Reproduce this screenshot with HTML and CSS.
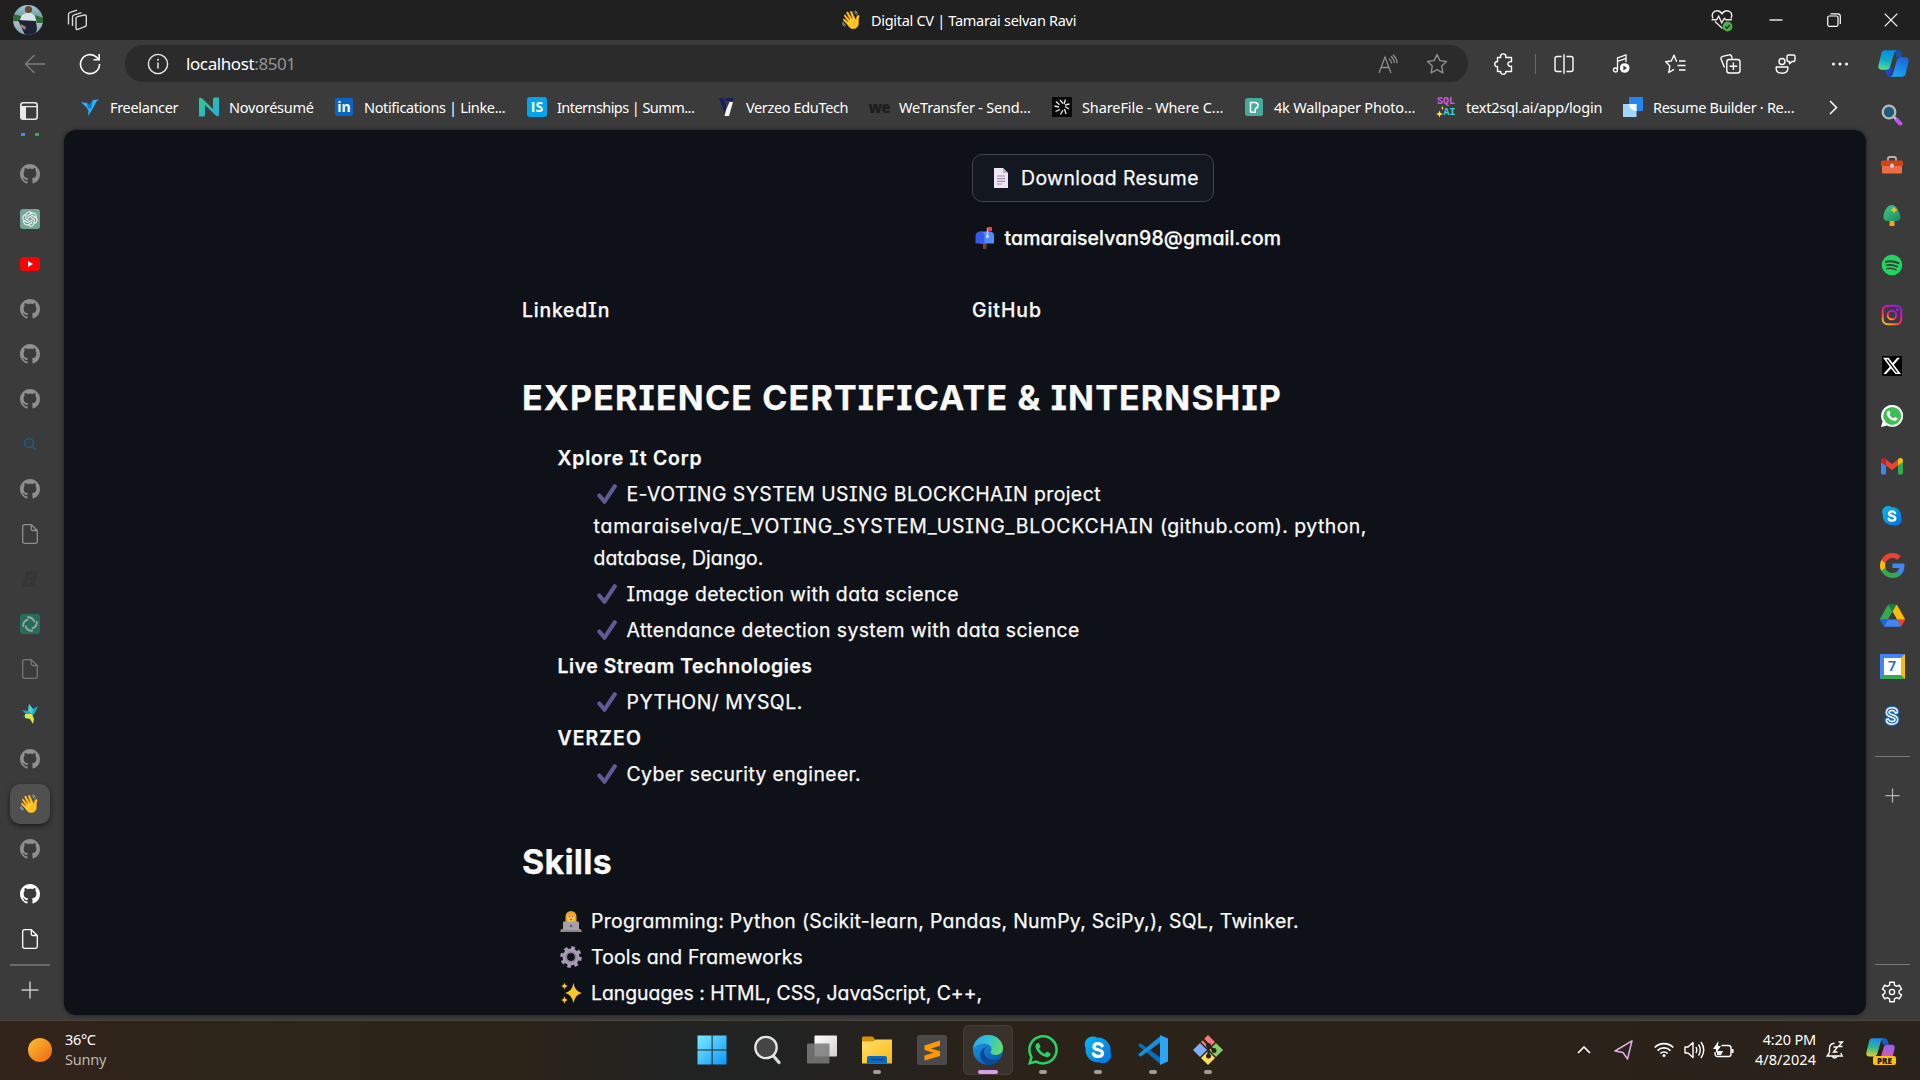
FILE: index.html
```html
<!DOCTYPE html>
<html lang="en">
<head>
<meta charset="utf-8">
<title>Digital CV | Tamarai selvan Ravi</title>
<link rel="stylesheet" href="styles.css">
</head>
<body>
<svg class="defs" aria-hidden="true">
  <defs>
    <linearGradient id="gCyan" x1="0" y1="0" x2="1" y2="1"><stop offset="0" stop-color="#7ceaff"/><stop offset="1" stop-color="#0f97fb"/></linearGradient>
    <linearGradient id="gNovo" x1="0" y1="0" x2="1" y2="1"><stop offset="0" stop-color="#34c78f"/><stop offset="1" stop-color="#1fb0dc"/></linearGradient>
    <linearGradient id="gCopA" x1="0.4" y1="0" x2="0.2" y2="1"><stop offset="0" stop-color="#0b8be0"/><stop offset=".5" stop-color="#10a9c9"/><stop offset="1" stop-color="#5fe08a"/></linearGradient>
    <linearGradient id="gCopB" x1="0.7" y1="0" x2="0.3" y2="1"><stop offset="0" stop-color="#1f63d8"/><stop offset="1" stop-color="#18a8f8"/></linearGradient>
    <linearGradient id="gPreA" x1="0.3" y1="0" x2="0.2" y2="1"><stop offset="0" stop-color="#1c8af0"/><stop offset=".5" stop-color="#2fb98d"/><stop offset="1" stop-color="#e5cf2c"/></linearGradient>
    <linearGradient id="gPreB" x1="0.7" y1="0" x2="0.3" y2="1"><stop offset="0" stop-color="#9a5cf2"/><stop offset="1" stop-color="#f25d8c"/></linearGradient>
    <linearGradient id="gInsta" x1="0.2" y1="1" x2="0.8" y2="0"><stop offset="0" stop-color="#fdb52a"/><stop offset=".35" stop-color="#fb2f5b"/><stop offset=".65" stop-color="#e016b5"/><stop offset="1" stop-color="#8a1df5"/></linearGradient>
    <linearGradient id="gSun" x1="0" y1="0" x2="1" y2="1"><stop offset="0" stop-color="#f8c235"/><stop offset="1" stop-color="#f2640c"/></linearGradient>
    <linearGradient id="gFolder" x1="0" y1="0" x2="1" y2="1"><stop offset="0" stop-color="#ffdf72"/><stop offset="1" stop-color="#fbb80c"/></linearGradient>
    <linearGradient id="gSkype" x1="0" y1="0" x2="1" y2="1"><stop offset="0" stop-color="#08b8f2"/><stop offset="1" stop-color="#0a6fd8"/></linearGradient>
    <linearGradient id="gEdgeA" x1="0" y1="0.3" x2="1" y2="0.6"><stop offset="0" stop-color="#2ba6e8"/><stop offset=".5" stop-color="#34c4d0"/><stop offset="1" stop-color="#67dd5d"/></linearGradient>
    <linearGradient id="gEdgeB" x1="0" y1="0" x2=".8" y2="1"><stop offset="0" stop-color="#1f9ee8"/><stop offset="1" stop-color="#0a55ad"/></linearGradient>
    <linearGradient id="gPane" x1="0" y1="0" x2="1" y2="1"><stop offset="0" stop-color="#ffffff"/><stop offset="1" stop-color="#cfcfcf"/></linearGradient>
    <linearGradient id="gTree" x1="0" y1="0" x2="1" y2="1"><stop offset="0" stop-color="#46c98a"/><stop offset="1" stop-color="#178a62"/></linearGradient>
    <linearGradient id="gSky" x1="0" y1="0" x2="0" y2="1"><stop offset="0" stop-color="#9fc9e4"/><stop offset=".45" stop-color="#6f9a86"/><stop offset=".6" stop-color="#aeb8bb"/><stop offset="1" stop-color="#7aa9c4"/></linearGradient>
    <clipPath id="cAvatar"><circle cx="15" cy="15" r="15"/></clipPath>

    <symbol id="github" viewBox="0 0 16 16"><path fill="currentColor" d="M8 0C3.58 0 0 3.58 0 8c0 3.54 2.29 6.53 5.47 7.59.4.07.55-.17.55-.38 0-.19-.01-.82-.01-1.49-2.01.37-2.53-.49-2.69-.94-.09-.23-.48-.94-.82-1.13-.28-.15-.68-.52-.01-.53.63-.01 1.08.58 1.23.82.72 1.21 1.87.87 2.33.66.07-.52.28-.87.51-1.07-1.78-.2-3.64-.89-3.64-3.95 0-.87.31-1.59.82-2.15-.08-.2-.36-1.02.08-2.12 0 0 .67-.21 2.2.82.64-.18 1.32-.27 2-.27.68 0 1.36.09 2 .27 1.53-1.04 2.2-.82 2.2-.82.44 1.1.16 1.92.08 2.12.51.56.82 1.27.82 2.15 0 3.07-1.87 3.75-3.65 3.95.29.25.54.73.54 1.48 0 1.07-.01 1.93-.01 2.2 0 .21.15.46.55.38A8.01 8.01 0 0 0 16 8c0-4.42-3.58-8-8-8z"/></symbol>
    <symbol id="page" viewBox="0 0 20 20"><path fill="none" stroke="currentColor" stroke-width="1.3" stroke-linejoin="round" d="M4.5.7h6.800L17.300 6.500V17.500a1.800 1.800 0 0 1-1.800 1.800h-11a1.800 1.800 0 0 1-1.800-1.800v-15A1.800 1.800 0 0 1 4.500.7zM11.300.9v4.200a1.400 1.400 0 0 0 1.400 1.400h4.500"/></symbol>
    <symbol id="check" viewBox="0 0 20 20"><path fill="none" stroke="#635994" stroke-width="4.200" stroke-linecap="round" stroke-linejoin="round" d="M2.300 11.500l5.200 6.200L17.700 2.300"/></symbol>
    <symbol id="plus" viewBox="0 0 18 18"><path fill="none" stroke="currentColor" stroke-width="1.500" d="M9 .5v17M.5 9h17"/></symbol>
    <symbol id="whatsapp" viewBox="0 0 16 16"><path fill="currentColor" d="M13.601 2.326A7.85 7.85 0 0 0 7.994 0C3.627 0 .068 3.558.064 7.926c0 1.399.366 2.76 1.057 3.965L0 16l4.204-1.102a7.9 7.9 0 0 0 3.79.965h.004c4.368 0 7.926-3.558 7.93-7.93A7.9 7.9 0 0 0 13.6 2.326zM7.994 14.521a6.600 6.600 0 0 1-3.356-.92l-.24-.144-2.494.654.666-2.433-.156-.251a6.560 6.560 0 0 1-1.007-3.505c0-3.626 2.957-6.584 6.591-6.584a6.560 6.560 0 0 1 4.660 1.931 6.560 6.560 0 0 1 1.928 4.660c-.004 3.639-2.961 6.592-6.592 6.592m3.615-4.934c-.197-.099-1.170-.578-1.353-.646-.182-.065-.315-.099-.445.099-.133.197-.513.646-.627.775-.114.133-.232.148-.430.050-.197-.100-.836-.308-1.592-.985-.590-.525-.985-1.175-1.103-1.372-.114-.198-.011-.304.088-.403.087-.088.197-.232.296-.346.100-.114.133-.198.198-.330.065-.134.034-.248-.015-.347-.050-.099-.445-1.076-.612-1.470-.160-.389-.323-.335-.445-.340-.114-.007-.247-.007-.380-.007a.730.730 0 0 0-.529.247c-.182.198-.691.677-.691 1.654s.710 1.916.810 2.049c.098.133 1.394 2.132 3.383 2.992.470.205.840.326 1.129.418.475.152.904.129 1.246.080.380-.058 1.171-.480 1.338-.943.164-.464.164-.860.114-.943-.049-.084-.182-.133-.380-.232"/></symbol>
    <symbol id="skype" viewBox="0 0 24 24"><path fill="url(#gSkype)" d="M7.200 1.200a6.200 6.200 0 0 1 4.300.9A10 10 0 0 1 22 13.600a6.400 6.400 0 0 1-8.700 8.300A10 10 0 0 1 2.100 10.600 6.400 6.400 0 0 1 7.200 1.200z"/><path fill="none" stroke="#fff" stroke-width="2.600" stroke-linecap="round" d="M15.300 8.700c-.6-1.300-1.800-1.800-3.300-1.800-1.900 0-3.300.9-3.300 2.400 0 3.500 6.900 1.500 6.900 5.200 0 1.700-1.600 2.600-3.600 2.600-1.800 0-3.100-.7-3.700-2.100"/></symbol>
  </defs>
</svg>

<header class="titlebar">
  <div class="title-left">
    <svg width="30" height="30" viewBox="0 0 30 30"><g clip-path="url(#cAvatar)"><rect width="30" height="30" fill="url(#gSky)"/><path fill="#2f6a3a" d="M0 9l8 2v5H0zM22 10l8 3v5h-8z"/><path fill="#d7e3ea" d="M6 17l3-7 4-2h5l4 3 2 8H8z"/><path fill="#1d2438" d="M5 15l18 1 1 8-2 6H12z"/><circle cx="15.500" cy="4.500" r="3.600" fill="#6d4238"/><path fill="#b07a62" d="M8 19l5 3-1 3-4-3z"/></g></svg>
    <svg width="22" height="22" viewBox="0 0 22 22" fill="none" stroke="#d8d8d8" stroke-width="1.400" stroke-linejoin="round"><path d="M10 9.500q0-1.500 1.500-1.900l7-1.600q1.800-.3 1.800 1.400v8.400q0 1.500-1.500 1.900l-7 2.600Q10 21 10 19zM6.500 17V8q0-1.700 1.700-2.200L15.500 3.600M2.500 15.500V5.500q0-1.600 1.600-2.100L11 1.200"/></svg>
  </div>
  <div class="title-mid"><span class="emoji">👋</span><span class="ui t-title">Digital CV | Tamarai selvan Ravi</span></div>
  <div class="title-right">
    <span><svg width="22" height="23" viewBox="0 0 22 23"><path fill="none" stroke="#e8e8e8" stroke-width="1.400" d="M2 9.500C0 5 2.500 1.800 6 1.800c2.500 0 4 1.400 5 3 1-1.600 2.500-3 5-3 3.500 0 6 3.200 4 7.700M4 12.500l7.500 7M.5 10.800h5l2.200-3.500 3 6.500 2.600-4.500 1.500 1.500H21"/><circle cx="16.500" cy="17.500" r="4.900" fill="#49b04f"/><path fill="none" stroke="#1f1f1f" stroke-width="1.300" d="M14.200 17.600l1.700 1.700 3-3.300"/></svg></span>
    <span><svg width="14" height="14" viewBox="0 0 14 14"><path stroke="#fff" stroke-width="1.300" d="M.5 7h13"/></svg></span>
    <span><svg width="14" height="14" viewBox="0 0 14 14" fill="none" stroke="#fff" stroke-width="1.200"><rect x=".7" y="3" width="10.300" height="10.300" rx="1.500"/><path d="M3.500.8h7.300a2.500 2.500 0 0 1 2.500 2.500V11"/></svg></span>
    <span><svg width="14" height="14" viewBox="0 0 14 14"><path stroke="#fff" stroke-width="1.200" d="M.7.7l12.600 12.600M13.300.7L.7 13.300"/></svg></span>
  </div>
</header>

<nav class="toolbar">
  <span><svg width="22" height="20" viewBox="0 0 22 20" fill="none" stroke="#7d7d7d" stroke-width="1.400"><path d="M21 10H1.500M10.500 1L1.500 10l9 9"/></svg></span>
  <span><svg width="22" height="22" viewBox="0 0 22 22" fill="none" stroke="#fff" stroke-width="1.600"><path d="M20.500 11A9.500 9.500 0 1 1 17.500 4.200L20 6.500M20.200 1v5.700h-5.700"/></svg></span>
  <div class="address">
    <svg width="22" height="22" viewBox="0 0 22 22"><circle cx="11" cy="11" r="9.600" fill="none" stroke="#e8e8e8" stroke-width="1.400"/><path stroke="#e8e8e8" stroke-width="1.500" d="M11 9.500v6"/><circle cx="11" cy="6.800" r="1" fill="#e8e8e8"/></svg>
    <span class="url">localhost<i>:8501</i></span>
    <span class="address-icons">
      <svg width="20" height="20" viewBox="0 0 20 20" fill="none" stroke="#8f8f8f" stroke-width="1.300"><path d="M1 19L7 3l6 16M3 13.500h8M11 4.500a6 6 0 0 1 2.500 5M13 2.300a9 9 0 0 1 3.300 6.800M15 .7a11 11 0 0 1 4 8.500"/></svg>
      <svg width="22" height="22" viewBox="0 0 22 22" fill="none" stroke="#8f8f8f" stroke-width="1.400" stroke-linejoin="round"><path d="M11 1.500l2.900 6.100 6.600.9-4.800 4.600 1.200 6.700L11 16.600l-5.900 3.200 1.200-6.700L1.500 8.500l6.600-.9z"/></svg>
    </span>
  </div>
  <div class="tools">
    <span><svg width="20" height="22" viewBox="0 0 20 22" fill="none" stroke="#fff" stroke-width="1.400" stroke-linejoin="round"><path d="M3.500 4.500h3.200C6 2 7.500.9 9.200.9s3.200 1.200 2.500 3.600H17.500V8.800c-2.200-.6-3.600.6-3.600 2.200s1.400 2.800 3.600 2.200V18.500H11.700c.6 1.700-.8 2.600-2.500 2.600s-3-1-2.500-2.600H3.500V13.500C1.600 14 .8 12.600.8 11s1-2.700 2.700-2.200z"/></svg></span>
    <span class="rule"></span>
    <span><svg width="20" height="20" viewBox="0 0 20 20" fill="none" stroke="#fff" stroke-width="1.400"><path d="M7.500 2.500H3A2 2 0 0 0 1 4.500v11a2 2 0 0 0 2 2h4.500M12.500 2.500H17a2 2 0 0 1 2 2v11a2 2 0 0 1-2 2h-4.500M10 .3v19.400"/></svg></span>
    <span><svg width="18" height="20" viewBox="0 0 18 20" fill="none" stroke="#fff" stroke-width="1.300"><path d="M5.500 16V4l8.500-3v7M5.500 7.300L14 4.300"/><circle cx="3.400" cy="16" r="2"/><circle cx="12.700" cy="14" r="4.800" fill="#fff" stroke="none"/><path fill="#3b3b3b" stroke="none" d="M11.300 11.500v5l3.800-2.500z"/></svg></span>
    <span><svg width="21" height="20" viewBox="0 0 21 20" fill="none" stroke="#fff" stroke-width="1.400" stroke-linejoin="round"><path d="M12 7.200h-.5L9 1.200 6.300 7l-5.500.8 4 4.200-1 6.500L9 15.300M14 7h6.500M12.500 11.500h8M14 16h6.500"/></svg></span>
    <span><svg width="21" height="20" viewBox="0 0 21 20" fill="none" stroke="#fff" stroke-width="1.400"><path d="M4.500 13.500L1.200 5.500A2.500 2.500 0 0 1 2.700 2.300L9 .9a2 2 0 0 1 2.500 1.300l.8 2.300"/><rect x="6.800" y="5.500" width="13.200" height="13.500" rx="2.500"/><path d="M13.400 8.500v7.500M9.600 12.200h7.600"/></svg></span>
    <span><svg width="21" height="20" viewBox="0 0 21 20" fill="none" stroke="#fff" stroke-width="1.400" stroke-linejoin="round"><circle cx="7" cy="7.500" r="3"/><path d="M1.200 13h11.600v1.500c0 3-2.300 4.700-5.800 4.700s-5.800-1.700-5.800-4.700zM13.500 1h5a1.500 1.500 0 0 1 1.500 1.500v3.500a1.500 1.500 0 0 1-1.500 1.500H17l-2.500 2.300V7.500h-1A1.500 1.500 0 0 1 12 6V2.500A1.500 1.500 0 0 1 13.500 1z"/></svg></span>
    <span><svg width="18" height="6" viewBox="0 0 18 6" fill="#fff"><circle cx="2.500" cy="3" r="1.500"/><circle cx="9" cy="3" r="1.500"/><circle cx="15.500" cy="3" r="1.500"/></svg></span>
    <span><svg width="31" height="27" viewBox="0 0 31 27"><path fill="#1c46cf" d="M6 18h9l-3 9c-2 0-3-1-3.700-3z"/><path fill="#1552a8" d="M17 .3h3c2 0 2.800 1 3.300 3l1.200 4h-6.500z"/><path fill="url(#gCopA)" d="M7 .3h12c-2 .6-2.700 2-3.300 4.200l-3.500 12C11.500 18.800 10.500 19.800 8 19.800H3.500C.8 19.800-.2 17.700.5 15L3.300 3.500C3.900 1.300 5 .3 7 .3z"/><path fill="url(#gCopB)" d="M23 7.300h4.500c2.700 0 3.700 2 3 4.700L27.700 23.500c-.6 2.200-1.700 3.200-3.700 3.200H12c2-.6 2.700-2 3.300-4.200l3.500-12C19.500 8.200 20.500 7.300 23 7.300z"/></svg></span>
  </div>
</nav>

<div class="bookmarks">
  <span class="panel-toggle"><svg width="18" height="18" viewBox="0 0 18 18"><path fill="#e8e8e8" d="M1 5h5v12H3a2 2 0 0 1-2-2z"/><rect x=".8" y=".8" width="16.400" height="16.400" rx="2.500" fill="none" stroke="#e8e8e8" stroke-width="1.600"/><path stroke="#e8e8e8" stroke-width="1.300" d="M1 4.600h16"/></svg></span>
  <a><svg width="20" height="20" viewBox="0 0 20 20"><path fill="#29b2fe" d="M1 5l6 1 2 3 4-6 6-.5-2.500 2L12 13l-4 6 .5-5L7 11z"/><path fill="#0e7fd0" d="M7 6l3 2-2 5zM13 3l-2 9-3-2z"/></svg><span class="ui b1">Freelancer</span></a>
  <a><svg width="20" height="20" viewBox="0 0 20 20"><path fill="url(#gNovo)" d="M0 2.500C0 .5 2 .3 3.500 1.800L14 12V2q0-1.500 1.500-1.500H20v17c0 2-2 2.300-3.500.8L6 8v10q0 1.500-1.500 1.500H0z"/></svg><span class="ui b2">Novorésumé</span></a>
  <a><i class="fav linkedin">in</i><span class="ui b3">Notifications | Linke...</span></a>
  <a><i class="fav internshala">IS</i><span class="ui b4">Internships | Summ...</span></a>
  <a class="verzeo"><svg width="20" height="20" viewBox="0 0 20 20"><path fill="#18205a" d="M1 1h4.500L8 8V17h-1zM7 1h9l-1.500 3H8z"/><path fill="#f4f4f4" d="M11.500 5H15l-4 14H6.500L8 13z"/></svg><span class="ui b5">Verzeo EduTech</span></a>
  <a><i class="fav wetransfer">we</i><span class="ui b6">WeTransfer - Send...</span></a>
  <a><svg width="20" height="20" viewBox="0 0 20 20"><rect width="20" height="20" fill="#080808"/><g stroke="#e6e6e6" stroke-width="1.300" fill="none"><path d="M8 3l3 3.500M13.500 2.500L12 7M17.500 7l-4.500 1M17 12l-4-2.500M14 17l-1.500-5M8.500 17.500L11 13M3.500 14.500L8 12.500M2.500 9L7 10M4 4.500l3.500 3.300"/></g></svg><span class="ui b7">ShareFile - Where C...</span></a>
  <a><svg width="20" height="20" viewBox="0 0 20 20"><rect x="1" y="1" width="18" height="18" rx="2.500" fill="#46a99c"/><path fill="none" stroke="#fff" stroke-width="1.600" d="M6.500 15V5.500h5a3 3 0 0 1 2.500 3q0 2-2 2.700L11 13v2.300H6.500"/></svg><span class="ui b8">4k Wallpaper Photo...</span></a>
  <a><i class="fav sql"><b>SQL</b><b>AI</b><svg width="8" height="12" viewBox="0 0 8 12"><path fill="#ffe94a" d="M3.500 4.500L4.500 7 7 8 4.500 9 3.500 11.500 2.500 9 0 8 2.500 7zM6.500 0l.5 1.500L8 2l-1 .5L6.500 4 6 2.500 5 2l1-.5z"/></svg></i><span class="ui b9">text2sql.ai/app/login</span></a>
  <a><svg width="20" height="20" viewBox="0 0 20 20"><rect x="6" width="14" height="14" fill="#2386f0"/><rect y="7" width="13.500" height="13" fill="#a3d6fb"/><path fill="#f0f8ff" d="M6 7h7.500v7A7.500 7.500 0 0 1 6 7z"/></svg><span class="ui b10">Resume Builder · Re...</span></a>
  <span class="more"><svg width="9" height="15" viewBox="0 0 9 15"><path fill="none" stroke="#fff" stroke-width="1.500" d="M1 1l6.500 6.500L1 14"/></svg></span>
</div>

<div class="body">
  <aside class="tabs">
    <div class="cut"><b></b><b></b></div>
    <span><svg><use href="#github"/></svg></span>
    <span><svg viewBox="0 0 20 20"><rect width="20" height="20" rx="3" fill="#74a597"/><path fill="#fff" transform="translate(2.300 2.300) scale(.64)" d="M22.2819 9.8211a5.9847 5.9847 0 0 0-.5157-4.9108 6.0462 6.0462 0 0 0-6.5098-2.9A6.0651 6.0651 0 0 0 4.9807 4.1818a5.9847 5.9847 0 0 0-3.9977 2.9 6.0462 6.0462 0 0 0 .7427 7.0966 5.98 5.98 0 0 0 .511 4.9107 6.051 6.051 0 0 0 6.5146 2.9001A5.9847 5.9847 0 0 0 13.2599 24a6.0557 6.0557 0 0 0 5.7718-4.2058 5.9894 5.9894 0 0 0 3.9977-2.9001 6.0557 6.0557 0 0 0-.7475-7.0729zm-9.022 12.6081a4.4755 4.4755 0 0 1-2.8764-1.0408l.1419-.0804 4.7783-2.7582a.7948.7948 0 0 0 .3927-.6813v-6.7369l2.02 1.1686a.071.071 0 0 1 .038.052v5.5826a4.504 4.504 0 0 1-4.4945 4.4944zm-9.6607-4.1254a4.4708 4.4708 0 0 1-.5346-3.0137l.142.0852 4.783 2.7582a.7712.7712 0 0 0 .7806 0l5.8428-3.3685v2.3324a.0804.0804 0 0 1-.0332.0615L9.74 19.9502a4.4992 4.4992 0 0 1-6.1408-1.6464zM2.3408 7.8956a4.485 4.485 0 0 1 2.3655-1.9728V11.6a.7664.7664 0 0 0 .3879.6765l5.8144 3.3543-2.0201 1.1685a.0757.0757 0 0 1-.071 0l-4.8303-2.7865A4.504 4.504 0 0 1 2.3408 7.872zm16.5963 3.8558L13.1038 8.364 15.1192 7.2a.0757.0757 0 0 1 .071 0l4.8303 2.7913a4.4944 4.4944 0 0 1-.6765 8.1042v-5.6772a.79.79 0 0 0-.407-.667zm2.0107-3.0231l-.142-.0852-4.7735-2.7818a.7759.7759 0 0 0-.7854 0L9.409 9.2297V6.8974a.0662.0662 0 0 1 .0284-.0615l4.8303-2.7866a4.4992 4.4992 0 0 1 6.6802 4.66zM8.3065 12.863l-2.02-1.1638a.0804.0804 0 0 1-.038-.0567V6.0742a4.4992 4.4992 0 0 1 7.3757-3.4537l-.142.0805L8.704 5.459a.7948.7948 0 0 0-.3927.6813zm1.0976-2.3654l2.602-1.4998 2.6069 1.4998v2.9994l-2.5974 1.4997-2.6067-1.4997Z"/></svg></span>
    <span><svg viewBox="0 0 20 20"><rect y="3" width="20" height="14" rx="3.500" fill="#fe0000"/><path fill="#fff" d="M8 7l5 3-5 3z"/></svg></span>
    <span><svg><use href="#github"/></svg></span>
    <span><svg><use href="#github"/></svg></span>
    <span><svg><use href="#github"/></svg></span>
    <span><svg viewBox="0 0 20 20" fill="none" stroke="#24587f" stroke-width="1.700"><circle cx="9" cy="9" r="4.500"/><path d="M12.300 12.300L16 16"/></svg></span>
    <span><svg><use href="#github"/></svg></span>
    <span><svg><use href="#page"/></svg></span>
    <span><svg viewBox="0 0 20 20"><path fill="#363636" d="M6 2h12l-3.500 16H2zM9 6l-.7 3h3l.7-3zM7.800 11l-.7 3h3l.7-3z" fill-rule="evenodd"/></svg></span>
    <span><svg viewBox="0 0 20 20"><rect width="20" height="20" rx="3" fill="#256f5a"/><g fill="none" stroke="#a0a5a3" stroke-width="1.900" stroke-linecap="round"><path d="M8 3.200a6.500 6.500 0 0 1 6.300 4.300M16.800 8a6.500 6.500 0 0 1-4.300 6.300M12 16.800a6.500 6.500 0 0 1-6.300-4.300M3.200 12a6.500 6.500 0 0 1 4.300-6.300"/></g></svg></span>
    <span><svg class="dim"><use href="#page"/></svg></span>
    <span><svg viewBox="0 0 20 20"><path fill="#26a8c4" d="M2 6l6 1 1-7 4 5 5-3-3 7-3 3-9 1 3-3z"/><path fill="#52c9cf" d="M9 0l4 5-1 5-4-3z"/><path fill="#e2e34b" d="M5 10l7 0 2 5-1 5-3-5-5-1z"/></svg></span>
    <span><svg><use href="#github"/></svg></span>
    <span class="active"><span class="emoji">👋</span></span>
    <span><svg><use href="#github"/></svg></span>
    <span class="lit"><svg><use href="#github"/></svg></span>
    <span class="lit"><svg><use href="#page"/></svg></span>
    <hr>
    <span class="new"><svg><use href="#plus"/></svg></span>
  </aside>

  <main class="page">
    <div class="column">
      <div class="pair">
        <div></div>
        <div class="contact">
          <a class="download"><svg width="20" height="22" viewBox="0 0 20 22"><path fill="#efe6f5" d="M3 1h9l5 5v15H3z"/><path fill="#b9aec6" d="M12 1l5 5h-5z"/><path stroke="#9f93ad" stroke-width="1.200" d="M6 9h8M6 11.700h8M6 14.300h8M6 17h5"/></svg><span class="d1">Download Resume</span></a>
          <p class="mail"><svg width="22" height="22" viewBox="0 0 22 22"><path fill="#6d4436" d="M9 15h3.500v7H9z"/><path fill="#4f8dfb" d="M6 4.500h10.500A4.500 4.500 0 0 1 20 9v7.500H6z"/><path fill="#3758e8" d="M6 4.500A4.500 4.500 0 0 1 10.500 9v7.500H1.500V9A4.500 4.500 0 0 1 6 4.500z"/><path stroke="#d8d3e6" stroke-width="1.400" d="M13.500 1v8"/><circle cx="13.500" cy="9.500" r="1.500" fill="#cfe0d8"/><path fill="#f03b55" d="M13.500 0H18v4h-4.500z"/></svg><span class="d2">tamaraiselvan98@gmail.com</span></p>
        </div>
      </div>
      <div class="pair links"><a class="d3">LinkedIn</a><a class="d4">GitHub</a></div>
      <h2 class="h-exp">EXPERIENCE CERTIFICATE &amp; INTERNSHIP</h2>
      <ul>
        <li><strong class="e1">Xplore It Corp</strong>
          <ul>
            <li><svg class="mark"><use href="#check"/></svg><span class="e2">E-VOTING SYSTEM USING BLOCKCHAIN project</span><br><span class="e3">tamaraiselva/E_VOTING_SYSTEM_USING_BLOCKCHAIN</span><span class="e3b"> (github.com). python,</span><br><span class="e4">database, Django.</span></li>
            <li><svg class="mark"><use href="#check"/></svg><span class="e5">Image detection with data science</span></li>
            <li><svg class="mark"><use href="#check"/></svg><span class="e5">Attendance detection system with data science</span></li>
          </ul>
        </li>
        <li><strong class="e6">Live Stream Technologies</strong>
          <ul><li><svg class="mark"><use href="#check"/></svg><span class="e7">PYTHON/ MYSQL.</span></li></ul>
        </li>
        <li><strong class="e8">VERZEO</strong>
          <ul><li><svg class="mark"><use href="#check"/></svg><span class="e9">Cyber security engineer.</span></li></ul>
        </li>
      </ul>
      <h2 class="h-skills">Skills</h2>
      <ul>
        <li><svg class="mark left" viewBox="0 0 22 22"><path fill="#f0a02c" d="M5.500 6.500a5.500 5.500 0 0 1 11 0v8h-11z"/><path fill="#fbc84a" d="M7.500 5.500h7V9a3.500 3.500 0 0 1-7 0z"/><path stroke="#5b3a1c" stroke-width="1.100" d="M9 6.800h1M12 6.800h1"/><path stroke="#d8334a" stroke-width="1.100" d="M10 9.600h2"/><path fill="#e8912d" d="M.5 21q0-2 2-2h17q2 0 2 2v1H.5z"/><rect x="3" y="11.500" width="16" height="9" rx="1" fill="#a5a0a8"/><path fill="#8a858f" d="M2 20h18v2H2z"/><circle cx="11" cy="16" r="1.200" fill="#5f5966"/></svg><span class="s1">Programming: Python (Scikit-learn, Pandas, NumPy, SciPy,), SQL, Twinker.</span></li>
        <li><svg class="mark left" viewBox="0 0 22 22"><circle cx="11" cy="11" r="6.200" fill="none" stroke="#a79cb4" stroke-width="4.600"/><circle cx="11" cy="11" r="9.300" fill="none" stroke="#a79cb4" stroke-width="3" stroke-dasharray="3.650 3.650"/><circle cx="11" cy="11" r="5" fill="none" stroke="#8b7f9c" stroke-width="1.200"/></svg><span class="s2">Tools and Frameworks</span></li>
        <li><svg class="mark left" viewBox="0 0 22 22"><path fill="#fcc42e" d="M13.500 1q1.300 8.200 8.500 10-7.200 1.800-8.500 10Q12.200 12.800 5 11q7.200-1.800 8.500-10zM4.500.5Q5 3.500 8 4 5 4.500 4.500 7.500 4 4.500 1 4 4 3.500 4.500.5zM4.500 14q.5 3.300 3.500 4-3 .7-3.500 4Q4 18.700 1 18q3-.7 3.500-4z"/></svg><span class="s3">Languages : HTML, CSS, JavaScript, C++,</span></li>
      </ul>
    </div>
  </main>

  <aside class="apps">
    <span><svg viewBox="0 0 22 22"><path stroke="#c052f0" stroke-width="4.200" stroke-linecap="round" d="M15.800 16l3.400 3.400"/><path stroke="#bbb" stroke-width="2.500" d="M12.500 12.500l2.500 2.500"/><circle cx="8" cy="8" r="6.300" fill="#1d5a7c" stroke="#b8b8b8" stroke-width="2.300"/></svg></span>
    <span><svg viewBox="0 0 22 22"><path fill="none" stroke="#b0b4b8" stroke-width="1.800" d="M7 7V4.500Q7 3 8.500 3h5Q15 3 15 4.500V7"/><rect x="1" y="11" width="20" height="8.500" rx="1.200" fill="#ee6c45"/><path fill="#d64219" d="M0 8q0-1.500 1.500-1.500h19Q22 6.500 22 8v4H0z"/><rect x="9" y="9.500" width="4" height="4.500" rx="2" fill="#c8ccd0"/></svg></span>
    <span><svg viewBox="0 0 22 22"><path fill="#f3a71b" d="M8.500 14h5v8h-5z"/><path fill="url(#gTree)" d="M7.500 2.200a5.500 5.500 0 0 1 8 1.500c1.500 2 4 5.800 4 9.300 0 2.500-1.500 4-4 4H6.500c-2.500 0-4-1.500-4-4C2.500 8.500 5 4 7.500 2.200z"/><path fill="#ffb81e" d="M13 2.500l1.300 2.200L16.500 6l-2.200 1.300L13 9.500l-1.300-2.200L9.500 6l2.200-1.300z"/></svg></span>
    <span><svg viewBox="0 0 22 22"><circle cx="11" cy="11" r="10.300" fill="#1fd760"/><g fill="none" stroke="#3b3b3b" stroke-linecap="round"><path stroke-width="2" d="M4.800 7.800q6.500-1.800 12.600 1.400"/><path stroke-width="1.700" d="M5.300 11.300q5.500-1.500 11 1.400"/><path stroke-width="1.400" d="M5.800 14.600q5-1.200 9.300 1.200"/></g></svg></span>
    <span><svg viewBox="0 0 22 22" fill="none" stroke="url(#gInsta)" stroke-width="2"><rect x="1.800" y="1.800" width="18.400" height="18.400" rx="5"/><circle cx="11" cy="11" r="4.300"/><circle cx="16.200" cy="5.800" r="1.200" fill="#d31ad0" stroke="none"/></svg></span>
    <span><svg viewBox="0 0 22 22"><rect x="1" y="1" width="20" height="20" fill="#000"/><path fill="#fff" transform="translate(2 2) scale(1.120)" d="M12.600.75h2.454l-5.360 6.142L16 15.250h-4.937l-3.867-5.070-4.425 5.070H.316l5.733-6.570L0 .75h5.063l3.495 4.633L12.601.75Zm-.86 13.028h1.360L4.323 2.145H2.865z"/></svg></span>
    <span><svg viewBox="0 0 22 22"><path fill="#fff" d="M11.200 0A10.900 10.900 0 1 1 6 20.400L0 22l1.600-5.700A10.900 10.900 0 0 1 11.200 0z"/><circle cx="11.200" cy="10.900" r="9" fill="#3cbf52"/><path fill="#fff" d="M7.700 5.700c.5 0 .8.100 1 .6l.8 1.900c.1.400-.8 1.300-.8 1.500.8 1.700 2.100 2.900 3.900 3.500.3 0 1.200-1.400 1.500-1.300l2.100 1c.4.200.4.500.3 1-.3 1.300-1.700 1.900-2.900 1.800-3.800-.5-7.700-4-7.900-7.300 0-1.200.8-2.700 2-2.700z"/></svg></span>
    <span><svg viewBox="0 0 22 22"><path fill="#3f85f0" d="M0 7l5 3.500V19.500H1.500A1.500 1.500 0 0 1 0 18z"/><path fill="#35a853" d="M22 7l-5 3.500V19.500h3.500A1.500 1.500 0 0 0 22 18z"/><path fill="#e94335" d="M5 4.500l6 4.500 6-4.500v6L11 15l-6-4.500z"/><path fill="#c5221f" d="M0 5.500C0 2.900 2.800 2.200 5 4v6.500L0 7z"/><path fill="#fbbc04" d="M22 5.500C22 2.900 19.200 2.200 17 4v6.500L22 7z"/></svg></span>
    <span><svg><use href="#skype"/></svg></span>
    <span><svg class="big" viewBox="0 0 48 48"><path fill="#EA4335" d="M24 9.500c3.540 0 6.710 1.220 9.210 3.600l6.850-6.850C35.900 2.380 30.470 0 24 0 14.620 0 6.510 5.380 2.560 13.220l7.980 6.190C12.430 13.720 17.740 9.500 24 9.500z"/><path fill="#4285F4" d="M46.980 24.550c0-1.570-.15-3.090-.38-4.550H24v9.020h12.940c-.58 2.960-2.260 5.480-4.780 7.180l7.730 6c4.510-4.180 7.090-10.360 7.090-17.650z"/><path fill="#FBBC05" d="M10.530 28.590c-.48-1.450-.76-2.990-.76-4.590s.27-3.140.76-4.590l-7.980-6.190C.92 16.460 0 20.120 0 24c0 3.880.92 7.540 2.560 10.780l7.970-6.190z"/><path fill="#34A853" d="M24 48c6.480 0 11.930-2.130 15.890-5.810l-7.730-6c-2.150 1.450-4.920 2.300-8.160 2.300-6.260 0-11.570-4.220-13.470-9.910l-7.980 6.190C6.510 42.620 14.620 48 24 48z"/></svg></span>
    <span><svg class="big" viewBox="0 0 87.300 78"><path fill="#1a66d8" d="m6.600 66.850 3.850 6.650c.8 1.400 1.950 2.500 3.300 3.300l13.750-23.800h-27.500c0 1.550.4 3.100 1.200 4.500z"/><path fill="#34a853" d="m43.650 25-13.750-23.800c-1.350.8-2.500 1.900-3.300 3.300l-25.400 44a9.060 9.060 0 0 0 -1.200 4.500h27.500z"/><path fill="#ea4335" d="m73.550 76.800c1.350-.8 2.500-1.900 3.300-3.300l1.600-2.750 7.650-13.250c.8-1.400 1.200-2.950 1.200-4.500h-27.502l5.852 11.500z"/><path fill="#188038" d="m43.650 25 13.750-23.800c-1.350-.8-2.900-1.200-4.500-1.200h-18.500c-1.600 0-3.150.45-4.500 1.200z"/><path fill="#4285f4" d="m59.800 53h-32.300l-13.750 23.800c1.350.8 2.900 1.200 4.500 1.200h50.800c1.600 0 3.150-.45 4.500-1.200z"/><path fill="#fbbc04" d="m73.400 26.500-12.700-22c-.8-1.400-1.950-2.500-3.300-3.300l-13.750 23.800 16.150 28h27.450c0-1.550-.4-3.100-1.200-4.500z"/></svg></span>
    <span class="calendar"><b>7</b></span>
    <span><svg viewBox="0 0 22 24" fill="none" stroke-linecap="round"><path stroke="#1766c0" stroke-width="7.400" d="M15.500 7.300C15 5.300 13.500 4.500 11 4.500c-2.700 0-4.700 1.400-4.700 3.600 0 4.400 9.400 3.400 9.400 7.600 0 2.300-2 3.800-4.700 3.800-2.500 0-4-.9-4.700-2.700"/><path stroke="#fff" stroke-width="4.600" d="M15.500 7.300C15 5.300 13.500 4.500 11 4.500c-2.700 0-4.700 1.400-4.700 3.600 0 4.400 9.400 3.400 9.400 7.600 0 2.300-2 3.800-4.700 3.800-2.500 0-4-.9-4.700-2.700"/><path stroke="#1766c0" stroke-width="1.300" d="M15.500 7.300C15 5.300 13.500 4.500 11 4.500c-2.700 0-4.700 1.400-4.700 3.600 0 4.400 9.400 3.400 9.400 7.600 0 2.300-2 3.800-4.700 3.800-2.500 0-4-.9-4.700-2.700"/></svg></span>
    <hr>
    <span class="add"><svg><use href="#plus"/></svg></span>
    <hr class="low">
    <span class="gear"><svg viewBox="-11 -11 22 22" fill="none" stroke="#fff" stroke-width="1.400" stroke-linejoin="round"><path d="M-2.250-9.740h4.500L2.460-6.900 4.630-5.600 7.310-6.820 9.560-2.920 7.090-1.250V1.250L9.560 2.920 7.310 6.820 4.630 5.600 2.460 6.900 2.250 9.740H-2.250L-2.460 6.900-4.630 5.600-7.310 6.820-9.560 2.920-7.090 1.250V-1.250L-9.560-2.920-7.310-6.820-4.630-5.600-2.460-6.900z"/><circle r="2.600"/></svg></span>
  </aside>
</div>

<footer class="taskbar">
  <div class="weather"><svg width="24" height="24" viewBox="0 0 24 24"><circle cx="12" cy="12" r="12" fill="url(#gSun)"/></svg><div class="ui"><span class="w1">36°C</span><span class="w2">Sunny</span></div></div>
  <div class="pins">
    <span><svg viewBox="0 0 30 30"><path fill="url(#gCyan)" d="M.5.5H14.600V14.600H.5zM15.600.5H29.500V14.600H15.600zM.5 15.600H14.600V29.500H.5zM15.600 15.600H29.500V29.500H15.600z"/></svg></span>
    <span><svg viewBox="0 0 30 30"><path stroke="#d9d9d9" stroke-width="3.300" stroke-linecap="round" d="M21 20.500l6 7"/><circle cx="14" cy="12.500" r="10.700" fill="#454545" stroke="#e6e6e6" stroke-width="2.300"/></svg></span>
    <span><svg viewBox="0 0 30 30"><rect x="7.500" y=".5" width="22.500" height="21" rx="1" fill="url(#gPane)"/><rect x="0" y="8.500" width="22.500" height="20" rx="1" fill="#7a7a7a" fill-opacity=".85"/></svg></span>
    <span class="on"><svg viewBox="0 0 30 30"><path fill="#d99206" d="M0 3q0-1.500 1.500-1.500h9L14 5.500V10H0z"/><path fill="url(#gFolder)" d="M0 6.500h11l3-2H30V28.500H0z"/><path fill="#0b69bd" d="M5 28.500V23q0-2 2-2H23q2 0 2 2v5.500z"/><path stroke="#08437f" stroke-width="1.300" d="M9 24.500h12.500"/></svg></span>
    <span><svg viewBox="0 0 30 30"><rect width="30" height="30" rx="2" fill="#4a4a4a"/><path fill="#ff9800" d="M7.500 10.500L23 5.500v5.200l-9 2.800 9 2.700v4.800L7.500 25.500v-5l9-2.800-9-2.700z"/></svg></span>
    <span class="on current"><svg viewBox="0 0 30 30"><circle cx="15" cy="15" r="15" fill="url(#gEdgeB)"/><path fill="url(#gEdgeA)" d="M0 14C.5 6 7 0 15 0c9 0 15 6.300 15 13 0 4.500-3.300 7-7.200 7-3 0-5.300-1.200-5.300-2.700 0-1 1-1.500 1-3.500 0-2.800-3-5-7.300-5C6 8.800 2 11 0 14z"/><path fill="#0d4a96" d="M11 17c0-2 1-4 2.700-5-4.500 1-7 5-6.200 9.500C8.300 26.500 12.500 30 17 29.900c4.500-.3 8.500-3 10.500-6.500C20 27 11 23.500 11 17z"/></svg></span>
    <span class="on green"><svg><use href="#whatsapp"/></svg></span>
    <span class="on"><svg><use href="#skype"/></svg></span>
    <span class="on"><svg viewBox="0 0 30 30"><path fill="#0a6fb8" d="M0 10.500l2.500-2.300L23 23v6.500z"/><path fill="#1590dd" d="M0 19.500l2.500 2.300L23 7V.500z"/><path fill="#2ba5f5" d="M22 0l8 3.500v23L22 30z"/></svg></span>
    <span class="on"><svg viewBox="0 0 30 30"><path fill="#f47a78" d="M15 0l7 7-7 7-7-7z"/><path fill="#7eaef8" d="M7 8l7 7-7 7-7-7z"/><path fill="#86cc66" d="M23 8l7 7-7 7-7-7z"/><path fill="#fbdc63" d="M15 16l7 7-7 7-7-7z"/><path stroke="#2b221a" stroke-width="2.200" fill="none" d="M10 4l5.500 6v12M15.500 10l5 5"/><circle cx="15.500" cy="10.500" r="2.500" fill="#2b221a"/><circle cx="15.500" cy="21" r="2.500" fill="#2b221a"/><circle cx="21" cy="15.500" r="2.500" fill="#2b221a"/></svg></span>
  </div>
  <div class="tray">
    <span><svg width="14" height="8" viewBox="0 0 14 8"><path fill="none" stroke="#fff" stroke-width="1.700" d="M1 7l6-6 6 6"/></svg></span>
    <span><svg width="19" height="20" viewBox="0 0 19 20"><path fill="none" stroke="#e3aee8" stroke-width="1.500" stroke-linejoin="round" d="M1 11L18 .8 13.500 19 9 12.500z"/></svg></span>
    <span><svg width="20" height="16" viewBox="0 0 20 16" fill="none" stroke="#fff" stroke-width="1.600"><path d="M.7 5.500a13.200 13.200 0 0 1 18.600 0M3.500 8.600a9.200 9.200 0 0 1 13 0M6.300 11.500a5.300 5.300 0 0 1 7.400 0"/><circle cx="10" cy="13.500" r="1.500" fill="#fff" stroke="none"/></svg></span>
    <span><svg width="21" height="18" viewBox="0 0 21 18" fill="none" stroke="#fff" stroke-width="1.400" stroke-linejoin="round"><path d="M1 6h3l5-4.500v15L4 12H1zM12 6q1.500 3 0 6M14.500 3.500q3.500 5.500 0 11M17 1q5.500 8 0 16"/></svg></span>
    <span><svg width="21" height="18" viewBox="0 0 21 18"><path fill="none" stroke="#fff" stroke-width="1.400" d="M8.500 4.500h7A2.500 2.500 0 0 1 18 7v6a2.500 2.500 0 0 1-2.500 2.500h-11A2.500 2.500 0 0 1 2 13v-2"/><path fill="#fff" d="M18.500 8h2v4h-2zM5.500 0L0 8h3v4l5-7H5zM4 10h6l-2 4H4z"/></svg></span>
    <div class="ui clock"><span class="c1">4:20 PM</span><span class="c2">4/8/2024</span></div>
    <span><svg width="18" height="19" viewBox="0 0 18 19" fill="none" stroke="#fff" stroke-width="1.400"><path d="M8.500 2.200q-5 .3-5 5.300V11.500L1.200 15h15L14.700 12M6.500 15.500q2 3 4.500 0M7.500 6h4l-4 5h4M12.500 1h4l-4 4.500h4"/></svg></span>
    <span class="pre"><svg width="29" height="27" viewBox="0 0 31 27"><path fill="#1c5cc8" d="M17 .3h3c2 0 2.800 1 3.300 3l1.200 4h-6.500z"/><path fill="url(#gPreA)" d="M7 .3h12c-2 .6-2.700 2-3.300 4.200l-3.500 12C11.500 18.800 10.500 19.800 8 19.800H3.500C.8 19.800-.2 17.700.5 15L3.300 3.500C3.900 1.300 5 .3 7 .3z"/><path fill="url(#gPreB)" d="M23 7.300h4.500c2.700 0 3.700 2 3 4.700L27.700 23.500c-.6 2.200-1.700 3.200-3.700 3.200H12c2-.6 2.700-2 3.300-4.200l3.500-12C19.500 8.200 20.500 7.300 23 7.300z"/></svg><b>PRE</b></span>
  </div>
</footer>
</body>
</html>
```
FILE: styles.css
```css
* { box-sizing: border-box; }

body {
  margin: 0;
  width: 1920px;
  height: 1080px;
  overflow: hidden;
  display: flex;
  flex-direction: column;
  background: #3b3b3b;
  color: #fff;
  font-family: "Noto Sans", "Open Sans", sans-serif;
}

svg { display: block; flex: none; }
i { font-style: normal; }
.defs { position: absolute; width: 0; height: 0; }
.ui { font-size: 14.5px; line-height: 20px; white-space: pre; }
.emoji { display: flex; justify-content: center; width: 21px; font-family: "Noto Color Emoji", sans-serif; font-size: 18px; line-height: 20px; }

/* title bar */
.titlebar {
  height: 40px;
  flex: none;
  display: grid;
  grid-template-columns: 841px 1fr 226px;
  align-items: center;
  background: #202020;
}
.title-left { display: flex; align-items: center; gap: 24px; padding-left: 13px; }
.title-left svg + svg { margin-left: -1px; }
.title-mid { display: flex; align-items: center; gap: 9px; }
.t-title { letter-spacing: -.3px; }
.title-right { display: grid; grid-template-columns: 56px 52px 63px 52px; justify-items: center; align-items: center; }

/* toolbar */
.toolbar {
  height: 47px;
  flex: none;
  display: grid;
  grid-template-columns: 70px 40px 1358px 1fr;
  align-items: center;
}
.toolbar > span { display: flex; justify-content: center; }
.address {
  height: 37px;
  margin-left: 15px;
  padding: 0 20px 0 21.500px;
  border-radius: 18px;
  background: #2b2b2b;
  display: flex;
  align-items: center;
}
.url { margin-left: 17.500px; font-size: 17px; line-height: 24px; letter-spacing: -.4px; white-space: pre; }
.url i { color: #949494; }
.address-icons { display: flex; align-items: center; gap: 28px; margin-left: auto; }
.tools {
  display: grid;
  grid-template-columns: 54px 8px 50px 64px 44px 66px 44px 66px 40px;
  justify-items: center;
  align-items: center;
  margin-left: 9px;
}
.rule { width: 1px; height: 20px; background: #6a6a6a; }

/* bookmarks */
.bookmarks {
  height: 43px;
  flex: none;
  display: grid;
  grid-template-columns: 80px 119px 136px 192px 191px 151px 183px 192px 192px 187px 177px 67px;
  align-items: center;
  padding-bottom: 3px;
}
.bookmarks a { display: flex; align-items: center; gap: 10px; }
.bookmarks .verzeo { gap: 8px; }
.panel-toggle { padding: 7px 0 0 20px; }
.more { display: flex; justify-content: center; }
.fav { flex: none; width: 20px; height: 20px; display: flex; align-items: center; justify-content: center; font: 700 14px/20px "Open Sans", sans-serif; }
.linkedin { width: 18px; height: 18px; border-radius: 2px; background: #0a66c2; }
.bookmarks .linkedin + .ui { margin-left: 1px; }
.internshala { border-radius: 3px; background: #00a5ec; }
.wetransfer { color: #1d1d1d; font-weight: 800; font-size: 15px; letter-spacing: -1px; }
.sql { position: relative; flex-direction: column; font: 700 10px/11px "Liberation Mono", monospace; color: #c95ee8; }
.sql b { line-height: 11.5px; }
.sql b + b { color: #35d3e0; padding-left: 7px; }
.sql svg { position: absolute; left: 0; bottom: -1px; }
.b1 { letter-spacing: -.33px; }
.b2 { letter-spacing: -.241px; }
.b3 { letter-spacing: -.35px; }
.b4 { letter-spacing: -.56px; }
.b5 { letter-spacing: -.36px; }
.b6 { letter-spacing: -.19px; }
.b7 { letter-spacing: -.1px; }
.b8 { letter-spacing: -.17px; }
.b9 { letter-spacing: -.21px; }
.b10 { letter-spacing: -.3px; }

/* three columns: tab strip, page, app bar */
.body {
  height: 890px;
  flex: none;
  display: grid;
  grid-template-columns: 64px 1802px 54px;
}

.tabs { display: flex; flex-direction: column; align-items: center; padding: 3px 4px 0 0; color: #8f8f8f; }
.tabs > span { width: 40px; height: 45px; flex: none; display: flex; align-items: center; justify-content: center; }
.tabs svg { width: 20px; height: 20px; }
.tabs .dim { color: #777; }
.tabs .lit { color: #fff; }
.cut { height: 18.500px; display: flex; gap: 10px; flex: none; }
.cut b { width: 4px; height: 2.500px; background: #4285f4; }
.cut b + b { background: #34a853; }
.tabs .active { height: 40px; margin: 2px 0 3px; border-radius: 10px; background: #505050; box-shadow: 0 2px 5px rgba(0,0,0,.55); }
.tabs hr { width: 40px; height: 2px; margin: 2px 0; border: 0; background: #696969; flex: none; }
.tabs .new { color: #c8c8c8; }
.tabs .new svg { width: 18px; height: 18px; }

.page { height: 885px; overflow: hidden; border-radius: 12px; background: #0e1117; box-shadow: 0 0 4px rgba(0,0,0,.5); }
.column {
  width: 880px;
  margin-left: 458px;
  padding-top: 24px;
  font: 400 19.4px/32px Inter, sans-serif;
  font-feature-settings: "cv08", "cv11";
  -webkit-text-stroke: .25px currentColor;
  color: #fafafa;
}
.column span, .column strong, .column a, h2 { white-space: pre; }
.pair { display: grid; grid-template-columns: 450px 1fr; }
.download {
  width: 242px;
  height: 48px;
  border: 1px solid #41444c;
  border-radius: 10px;
  background: #131720;
  display: flex;
  align-items: center;
  padding-left: 18px;
  gap: 10px;
}
.mail { margin: 20px 0 0; height: 32px; display: flex; align-items: center; gap: 9px; padding-left: 1.500px; font-weight: 500; }
.links { margin-top: 40px; font-weight: 500; }
h2 { margin: 0; font-size: 34px; line-height: 44px; font-weight: 700; }
.h-exp { padding-top: 50px; letter-spacing: 1.17px; }
.h-skills { padding-top: 50px; letter-spacing: .2px; }
.column ul { list-style: none; margin: 0; padding: 0 0 0 36px; }
.column > ul { padding: 21.500px 0 0 35.500px; }
.column li { margin-top: 4px; }
.column > ul > li:first-child { margin-top: 0; }
.column strong { font-weight: 600; }
.mark { display: inline-block; width: 20px; height: 20px; margin: 0 10px 0 3px; vertical-align: -3px; }
.mark.left { width: 22px; height: 22px; margin: 0 9px 0 2.500px; vertical-align: -4px; }
.d1 { letter-spacing: .42px; }
.d2 { letter-spacing: .13px; }
.d3 { letter-spacing: .8px; }
.d4 { letter-spacing: .981px; }
.e1 { letter-spacing: .794px; }
.e2 { letter-spacing: .456px; }
.e3 { letter-spacing: .86px; }
.e3b { letter-spacing: .46px; }
.e4 { letter-spacing: .04px; }
.e5 { letter-spacing: .39px; }
.e6 { letter-spacing: .55px; }
.e7 { letter-spacing: .5px; }
.e8 { letter-spacing: 1.1px; }
.e9 { letter-spacing: .37px; }
.s1 { letter-spacing: .31px; }
.s2 { letter-spacing: .17px; }
.s3 { letter-spacing: -.02px; }

/* app bar on the right */
.apps { display: flex; flex-direction: column; align-items: center; padding-right: 2px; margin-top: -40px; }
.apps > span { height: 50.100px; width: 40px; flex: none; display: flex; align-items: center; justify-content: center; }
.apps svg { width: 22px; height: 22px; }
.apps .big { width: 25px; height: 25px; }
.calendar b {
  width: 25px;
  height: 25px;
  border: 4.500px solid;
  border-color: #4285f4 #fbbc04 #34a853 #4285f4;
  background: #fff;
  color: #1967d2;
  font: 600 14px/16px "Noto Sans", sans-serif;
  text-align: center;
}
.apps hr { width: 35px; height: 1px; margin: 14.500px 0 13.500px; border: 0; background: #777; flex: none; }
.apps .add { color: #b5b5b5; }
.apps .add svg { width: 15px; height: 15px; }
.apps hr.low { margin-top: 143.500px; margin-bottom: 2.500px; }

/* taskbar */
.taskbar {
  height: 60px;
  flex: none;
  display: grid;
  grid-template-columns: 684px 1fr 352px;
  border-top: 1px solid #4b443a;
  background: linear-gradient(90deg, #33241a 0, #2e241a 180px, #2b2419 520px, #212323 680px, #222222 800px, #2b2219 1000px, #2b2219 1500px, #2a231b 1920px);
}
.weather { display: flex; align-items: center; gap: 13px; padding: 0 0 3px 28px; }
.weather span, .clock span { display: block; }
.weather .ui { margin-bottom: 2px; }
.w1 { letter-spacing: -.323px; }
.w2 { letter-spacing: -.188px; color: #bdb8b2; }
.pins { display: flex; }
.pins > span { position: relative; width: 55.200px; height: 60px; display: flex; justify-content: center; padding-top: 14px; }
.pins svg { width: 30px; height: 30px; }
.pins .on::after {
  content: "";
  position: absolute;
  bottom: 7px;
  width: 8px;
  height: 4px;
  border-radius: 2px;
  background: #a09c98;
}
.pins .current { width: 50px; height: 50px; margin: 4px 2.600px 0; padding-top: 10px; border-radius: 6px; background: #39322a; box-shadow: inset 0 0 0 1px #453e36; }
.pins .current::after { bottom: 1px; width: 20px; background: #db9ee5; }
.green { color: #25d366; }
.tray { display: grid; grid-template-columns: 32px 46px 35px 26px 33px 77px 36px 55px; align-items: center; height: 58px; }
.tray > span { display: flex; justify-content: center; }
.clock { text-align: right; padding: 0 1px 2px 0; }
.c1 { letter-spacing: -.161px; }
.c2 { letter-spacing: .063px; }
.pre { position: relative; }
.pre b {
  position: absolute;
  right: 12px;
  bottom: -1px;
  width: 23px;
  height: 9px;
  border-radius: 2px;
  background: #fdbf12;
  color: #1d1600;
  font: 800 8px/9px "Open Sans", sans-serif;
  text-align: center;
}
```
